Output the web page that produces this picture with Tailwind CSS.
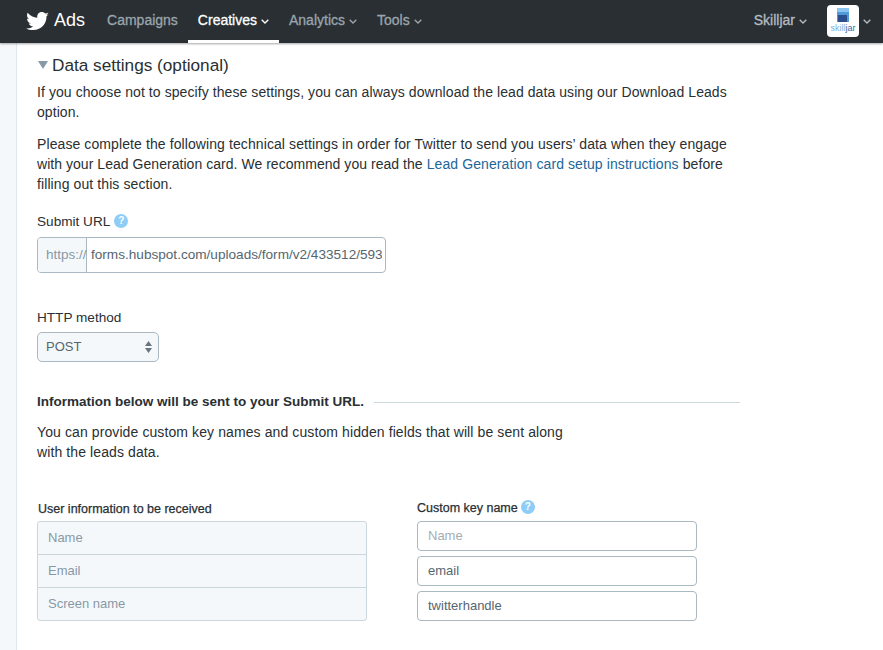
<!DOCTYPE html>
<html lang="en">
<head>
    <meta charset="UTF-8">
    <title>Twitter Ads</title>
    <script src="https://cdn.jsdelivr.net/npm/@tailwindcss/browser@4"></script>
</head>
<body class="h-[650px] overflow-hidden bg-white font-['Liberation_Sans',Arial,sans-serif] text-[#292f33]">
    <!-- Top nav -->
    <header class="relative z-10 flex h-[43px] items-center justify-between bg-[#292f33] shadow-[0_1px_2px_rgba(0,0,0,0.35)]">
        <nav class="flex h-full items-center text-[14px] [-webkit-text-stroke:0.3px]">
            <svg class="ml-[26px] h-[19px] w-[23px] fill-white" viewBox="0 0 24 20"><path d="M24 2.4c-.9.4-1.8.7-2.8.8 1-.6 1.8-1.6 2.2-2.7-1 .6-2 1-3.1 1.2C19.3.7 18 0 16.6 0c-2.7 0-4.9 2.2-4.9 4.9 0 .4 0 .8.1 1.1C7.7 5.8 4.1 3.9 1.7.9c-.4.7-.7 1.6-.7 2.5 0 1.7.9 3.2 2.2 4.1-.8 0-1.6-.2-2.2-.6v.1c0 2.4 1.7 4.4 3.9 4.8-.4.1-.8.2-1.3.2-.3 0-.6 0-.9-.1.6 2 2.4 3.4 4.6 3.4-1.7 1.3-3.8 2.1-6.1 2.1-.4 0-.8 0-1.2-.1C2.2 18.3 4.8 19 7.5 19c9.1 0 14-7.5 14-14v-.6c1-.7 1.8-1.6 2.5-2z"/></svg>
            <span class="ml-[5px] mb-[2px] text-[18px] text-white [-webkit-text-stroke:0px]">Ads</span>
            <a class="ml-[22px] mb-[2px] text-[#9aa5ad]">Campaigns</a>
            <a class="ml-[10px] flex h-full items-center gap-[4px] border-b-[3px] border-white px-[10px] pt-[1px] text-white">Creatives
                <svg class="mt-[2px] h-[5px] w-[8px] fill-none stroke-white stroke-[1.4]" viewBox="0 0 8 5"><path d="M.7.7 4 4l3.3-3.3"/></svg>
            </a>
            <a class="ml-[10px] mb-[2px] flex items-center gap-[4px] text-[#9aa5ad]">Analytics
                <svg class="mt-[2px] h-[5px] w-[8px] fill-none stroke-[#9aa5ad] stroke-[1.4]" viewBox="0 0 8 5"><path d="M.7.7 4 4l3.3-3.3"/></svg>
            </a>
            <a class="ml-[20px] mb-[2px] flex items-center gap-[4px] text-[#9aa5ad]">Tools
                <svg class="mt-[2px] h-[5px] w-[8px] fill-none stroke-[#9aa5ad] stroke-[1.4]" viewBox="0 0 8 5"><path d="M.7.7 4 4l3.3-3.3"/></svg>
            </a>
        </nav>
        <div class="flex items-center">
            <a class="mb-[2px] flex items-center gap-[4px] text-[14px] text-[#b4bcc2] [-webkit-text-stroke:0.3px]">Skilljar
                <svg class="mt-[2px] h-[5px] w-[8px] fill-none stroke-[#b4bcc2] stroke-[1.4]" viewBox="0 0 8 5"><path d="M.7.7 4 4l3.3-3.3"/></svg>
            </a>
            <!-- account logo -->
            <div class="ml-[20px] mb-[2px] flex h-[32px] w-[32px] flex-col items-center rounded-[4px] bg-white pt-[3px]">
                <svg class="h-[14px] w-[12px]" viewBox="0 0 12 14"><rect width="12" height="14" fill="#4f9ad8"/><rect width="12" height="4" fill="#8cc6f0"/><rect x="1" y="7" width="9" height="7" fill="#2a4f8c"/></svg>
                <span class="mt-[1px] text-[9px] leading-[10px] text-[#7ab3e0]">skill<span class="text-[#2f6ea8]">jar</span></span>
            </div>
            <svg class="ml-[4px] mr-[12px] h-[5px] w-[8px] fill-none stroke-[#b4bcc2] stroke-[1.4]" viewBox="0 0 8 5"><path d="M.7.7 4 4l3.3-3.3"/></svg>
        </div>
    </header>

    <div class="flex">
        <aside class="h-[607px] w-[17px] shrink-0 border-r border-[#e1e8ed] bg-[#f5f8fa]"></aside>
        <main class="w-[723px] pl-[20px] text-[14px] leading-[20px] tracking-[0.075px] text-[#292f33]">
            <h2 class="mt-[11px] flex items-center text-[17.2px] leading-[22px] tracking-normal">
                <span class="ml-[1px] h-0 w-0 border-x-[5px] border-t-[8px] border-x-transparent border-t-[#8899a6]"></span>
                <span class="ml-[4px]">Data settings (optional)</span>
            </h2>
            <p class="mt-[6px]">If you choose not to specify these settings, you can always download the lead data using our Download Leads option.</p>
            <p class="mt-[12px] tracking-[0.095px]">Please complete the following technical settings in order for Twitter to send you users’ data when they engage <span class="tracking-[0.04px]">with your Lead Generation card. We recommend you read the</span> <a class="text-[#226699]">Lead Generation card setup instructions</a> before filling out this section.</p>

            <label class="mt-[18px] flex items-center gap-[4px] text-[13.6px] tracking-normal">Submit URL
                <span class="mb-[3px] flex h-[14px] w-[14px] items-center justify-center rounded-full bg-[#8ecdf8] text-[10px] font-bold text-white">?</span>
            </label>
            <div class="mt-[5px] flex h-[36px] w-[349px] rounded-[4px] border border-[#aab8c2]">
                <span class="flex w-[49px] shrink-0 items-center rounded-l-[3px] border-r border-[#aab8c2] bg-[#f5f8fa] pl-[8px] text-[13.5px] tracking-normal text-[#8899a6]">https://</span>
                <div class="mr-[3px] flex flex-1 items-center overflow-hidden pl-[4px]">
                    <span class="whitespace-nowrap text-[13.6px] tracking-normal text-[#55666f]">forms.hubspot.com/uploads/form/v2/433512/5937</span>
                </div>
            </div>

            <label class="mt-[35px] block text-[13.6px] tracking-normal">HTTP method</label>
            <div class="mt-[4px] flex h-[30px] w-[122px] items-center justify-between rounded-[5px] border border-[#aab8c2] bg-[#f5f8fa] pl-[8px] pr-[6px] text-[13px] tracking-normal text-[#55666f]">POST
                <svg class="h-[12px] w-[7px] fill-[#66757f]" viewBox="0 0 7 12"><path d="M3.5 0 7 5H0zM3.5 12 0 7h7z"/></svg>
            </div>

            <div class="mt-[30px] flex items-center gap-[10px]">
                <span class="whitespace-nowrap text-[13.5px] font-bold tracking-normal">Information below will be sent to your Submit URL.</span>
                <span class="h-px flex-1 bg-[#ccd6dd]"></span>
            </div>
            <p class="mt-[10px] w-[540px] tracking-[0.1px]">You can provide custom key names and custom hidden fields that will be sent along with the leads data.</p>

            <div class="mt-[37px] flex items-start">
                <div class="w-[330px]">
                    <div class="pl-[1px] pt-[1px] text-[12.5px] leading-[18px] tracking-normal [-webkit-text-stroke:0.25px]">User information to be received</div>
                    <div class="mt-[3px] rounded-[3px] border border-[#ccd6dd] bg-[#f5f8fa] text-[13px] tracking-normal text-[#8899a6]">
                        <div class="flex h-[33px] items-center border-b border-[#ccd6dd] pl-[10px]">Name</div>
                        <div class="flex h-[33px] items-center border-b border-[#ccd6dd] pl-[10px]">Email</div>
                        <div class="flex h-[32px] items-center pl-[10px]">Screen name</div>
                    </div>
                </div>
                <div class="ml-[50px] w-[280px]">
                    <div class="flex items-center gap-[3px] text-[12.5px] leading-[18px] tracking-normal [-webkit-text-stroke:0.25px]">Custom key name
                        <span class="mb-[3px] flex h-[14px] w-[14px] items-center justify-center rounded-full bg-[#8ecdf8] text-[10px] font-bold text-white [-webkit-text-stroke:0px]">?</span>
                    </div>
                    <div class="mt-[4px] flex flex-col gap-[5px] text-[13px] tracking-normal text-[#55666f]">
                        <div class="flex h-[30px] items-center rounded-[4px] border border-[#aab8c2] pb-[1px] pl-[10px] text-[#a5adb3]">Name</div>
                        <div class="flex h-[30px] items-center rounded-[4px] border border-[#aab8c2] pb-[1px] pl-[10px]">email</div>
                        <div class="flex h-[30px] items-center rounded-[4px] border border-[#aab8c2] pb-[1px] pl-[10px]">twitterhandle</div>
                    </div>
                </div>
            </div>
        </main>
    </div>
</body>
</html>
